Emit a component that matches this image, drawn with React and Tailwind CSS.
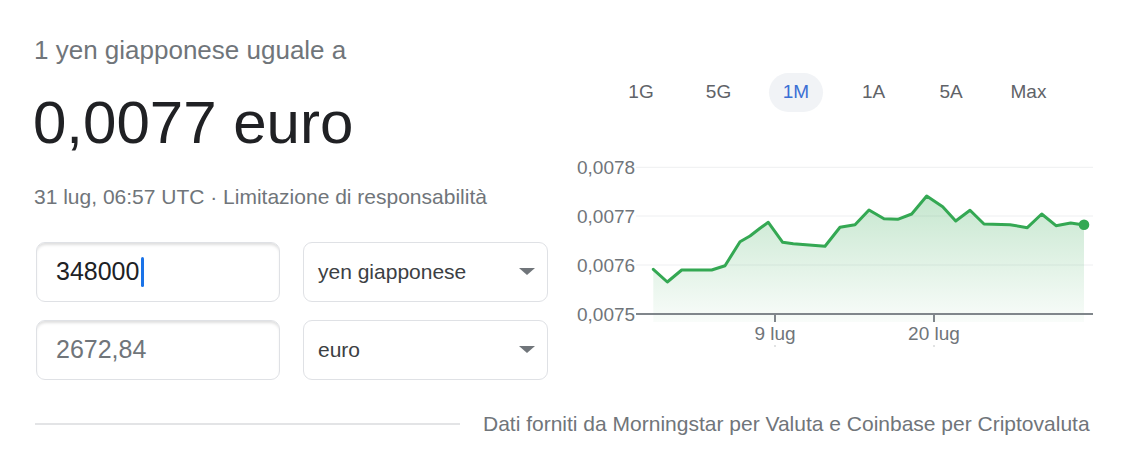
import React from "react";

const pts = [
  [93.3, 119.3], [107.3, 132], [121.7, 120], [151.7, 120], [165, 115.7], [180, 91.7],
  [190, 86], [200, 78.3], [208.3, 72.3], [222.7, 92.3], [233.3, 93.7], [265, 96.3],
  [280, 77.3], [295, 74.7], [309, 60], [324, 68.7], [337.7, 69.3], [351.7, 64],
  [366.7, 46], [382.7, 56.7], [395.7, 71], [410, 60.3], [424, 74], [450, 74.7],
  [467.3, 77.7], [481.7, 64], [496, 75.7], [510.7, 73], [524, 75],
];

function Chart() {
  const line = pts.map((p, i) => `${i ? "L" : "M"}${p[0]},${p[1]}`).join(" ");
  const area = `${line} L524,172 L93.3,172 Z`;
  const font = "Liberation Sans, Arial, sans-serif";
  const grid = [17.3, 66, 115];
  const labels = [
    ["0,0078", 24],
    ["0,0077", 73],
    ["0,0076", 122],
    ["0,0075", 171],
  ];
  return (
    <svg width="545" height="200" viewBox="0 0 545 200" className="block">
      <defs>
        <linearGradient id="g" x1="0" y1="0" x2="0" y2="1">
          <stop offset="0" stopColor="#34a853" stopOpacity="0.28" />
          <stop offset="1" stopColor="#34a853" stopOpacity="0.03" />
        </linearGradient>
      </defs>
      {grid.map((y) => (
        <line key={y} x1="76" x2="533" y1={y} y2={y} stroke="#eeeff1" strokeWidth="1" />
      ))}
      <path d={area} fill="url(#g)" />
      <line x1="76" x2="533" y1="164" y2="164" stroke="#80868b" strokeWidth="2" />
      <line x1="215" x2="215" y1="164" y2="172" stroke="#80868b" strokeWidth="2" />
      <line x1="374" x2="374" y1="164" y2="172" stroke="#80868b" strokeWidth="2" />
      <line x1="215" x2="215" y1="195" y2="197" stroke="#c4c7c9" strokeWidth="1" />
      <line x1="374" x2="374" y1="195" y2="197" stroke="#c4c7c9" strokeWidth="1" />
      <path d={line} fill="none" stroke="#34a853" strokeWidth="3" strokeLinejoin="round" strokeLinecap="round" />
      <circle cx="524" cy="74.7" r="5.3" fill="#34a853" />
      {labels.map(([t, y]) => (
        <text key={t} x="17" y={y} fontFamily={font} fontSize="19" fill="#70757a">
          {t}
        </text>
      ))}
      <text x="215" y="190" textAnchor="middle" fontFamily={font} fontSize="19" fill="#70757a">
        9 lug
      </text>
      <text x="374" y="190" textAnchor="middle" fontFamily={font} fontSize="19" fill="#70757a">
        20 lug
      </text>
    </svg>
  );
}

function Arrow() {
  return (
    <svg width="16" height="8" viewBox="0 0 16 8" className="block">
      <path d="M0,0 L16,0 L8,7 Z" fill="#70757a" />
    </svg>
  );
}

export default function App() {
  const tabs = ["1G", "5G", "1M", "1A", "5A", "Max"];
  return (
    <div className="w-[1125px] h-[471px] bg-white overflow-hidden font-['Liberation_Sans',Arial,sans-serif]">
      <div className="flex">
        <div className="w-[548px] pl-[33px] pt-[34px] shrink-0">
          <div className="text-[26px] leading-[32px] text-[#70757a] pl-[1px]">1 yen giapponese uguale a</div>
          <div className="mt-[21px] text-[60px] leading-[72px] text-[#202124]">0,0077 euro</div>
          <div className="mt-[24px] text-[21px] leading-[28px] text-[#70757a] pl-[1px]">
            31 lug, 06:57 UTC · Limitazione di responsabilità
          </div>
          <div className="mt-[31px] ml-[3px] flex flex-col gap-[18px]">
            <div className="flex gap-[23px]">
              <div className="w-[244px] h-[60px] rounded-[9px] border border-[#dfe1e5] shadow-[inset_0_3px_3px_-1px_rgba(0,0,0,0.13)] flex items-center pl-[19px]">
                <span className="text-[25px] text-[#202124]">348000</span>
                <span className="ml-[2px] w-[3px] h-[30px] rounded-[2px] bg-[#1a73e8]" />
              </div>
              <div className="w-[245px] h-[60px] rounded-[9px] border border-[#dfe1e5] flex items-center justify-between pl-[14px] pr-[12px]">
                <span className="text-[21px] text-[#3c4043]">yen giapponese</span>
                <Arrow />
              </div>
            </div>
            <div className="flex gap-[23px]">
              <div className="w-[244px] h-[60px] rounded-[9px] border border-[#dfe1e5] shadow-[inset_0_3px_3px_-1px_rgba(0,0,0,0.13)] flex items-center pl-[19px]">
                <span className="text-[25px] text-[#70757a]">2672,84</span>
              </div>
              <div className="w-[245px] h-[60px] rounded-[9px] border border-[#dfe1e5] flex items-center justify-between pl-[14px] pr-[12px]">
                <span className="text-[21px] text-[#3c4043]">euro</span>
                <Arrow />
              </div>
            </div>
          </div>
        </div>
        <div className="ml-[12px] w-[545px] shrink-0">
          <div className="mt-[73px] ml-[54px] flex gap-[23.5px]">
            {tabs.map((t) => (
              <div
                key={t}
                className={
                  t === "1M"
                    ? "w-[54px] h-[39px] rounded-full bg-[#f1f3f6] flex items-center justify-center text-[19px] text-[#3b6fd4]"
                    : "w-[54px] h-[39px] rounded-full flex items-center justify-center text-[19px] text-[#5f6368]"
                }
              >
                {t}
              </div>
            ))}
          </div>
          <div className="mt-[38px]">
            <Chart />
          </div>
        </div>
      </div>
      <div className="mt-[30px] flex items-center pl-[35px]">
        <div className="w-[425px] h-[2px] bg-[#e3e4e6]" />
        <div className="ml-[23px] text-[21px] leading-[28px] text-[#70757a]">
          Dati forniti da Morningstar per Valuta e Coinbase per Criptovaluta
        </div>
      </div>
    </div>
  );
}
